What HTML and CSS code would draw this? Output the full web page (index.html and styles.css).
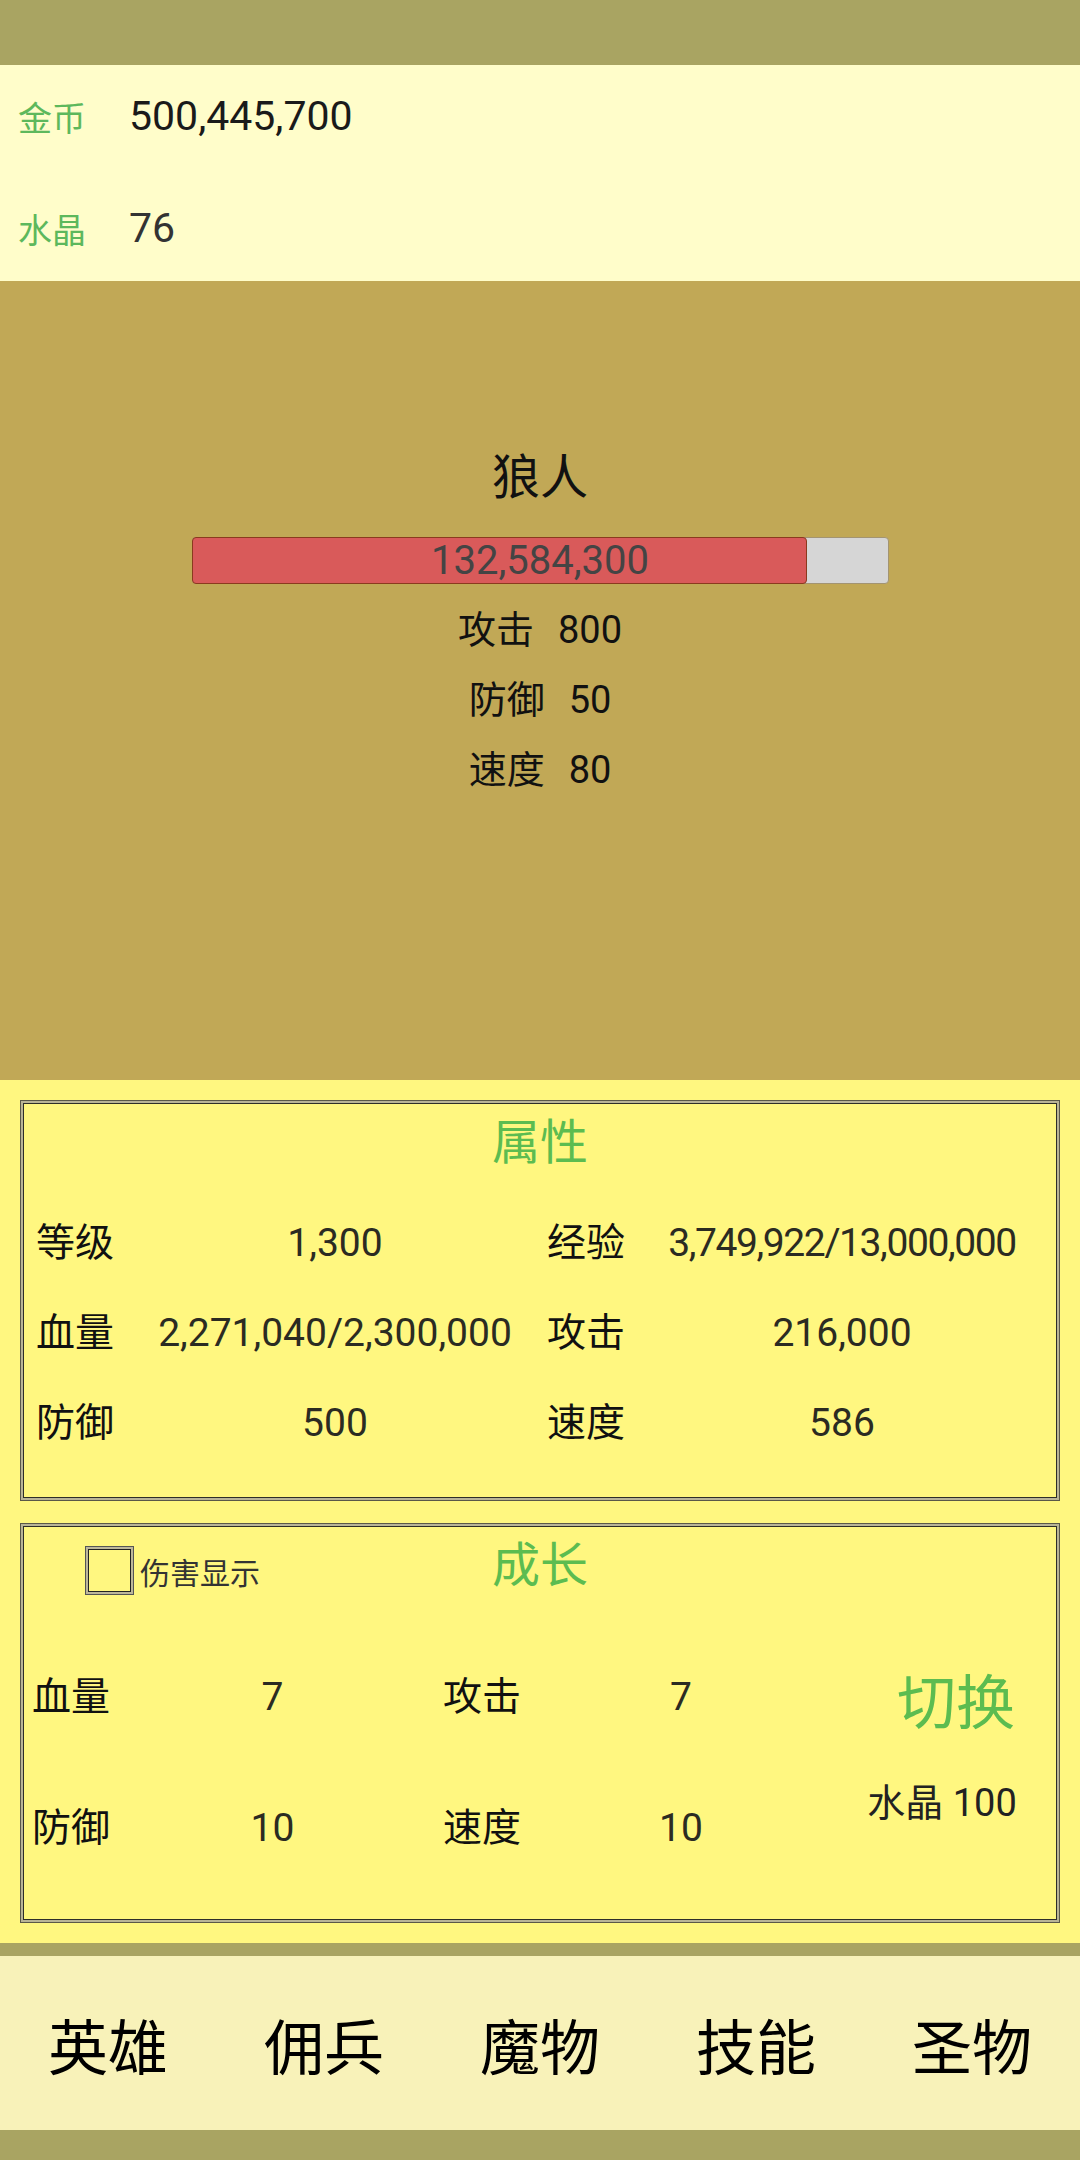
FILE: index.html
```html
<!DOCTYPE html>
<html>
<head>
  <title>狼人</title>
  <link rel="stylesheet" href="styles.css">
</head>
<body>

<div class="topbar"></div>

<div class="wallet">
  <div class="wallet-row"><span class="wallet-label">金币</span><span class="wallet-value">500,445,700</span></div>
  <div class="wallet-row"><span class="wallet-label">水晶</span><span class="wallet-value dim">76</span></div>
</div>

<div class="enemy">
  <div class="enemy-name">狼人</div>
  <div class="hpbar">
    <div class="hpfill" style="width: 88.6%"></div>
    <div class="hptext">132,584,300</div>
  </div>
  <div class="enemy-stats">
    <div class="enemy-stat"><span>攻击</span><span>800</span></div>
    <div class="enemy-stat"><span>防御</span><span>50</span></div>
    <div class="enemy-stat"><span>速度</span><span>80</span></div>
  </div>
</div>

<div class="panel">
  <div class="box attr">
    <div class="box-title">属性</div>
    <div class="attr-grid">
      <span class="lbl">等级</span><span class="val first">1,300</span>
      <span class="lbl">经验</span><span class="val tight">3,749,922/13,000,000</span>
      <span class="lbl">血量</span><span class="val first">2,271,040/2,300,000</span>
      <span class="lbl">攻击</span><span class="val">216,000</span>
      <span class="lbl">防御</span><span class="val first">500</span>
      <span class="lbl">速度</span><span class="val">586</span>
    </div>
  </div>

  <div class="box grow">
    <div class="grow-head">
      <label class="dmg-toggle"><span class="checkbox"></span><span>伤害显示</span></label>
      <div class="box-title">成长</div>
      <div></div>
    </div>
    <div class="grow-body">
      <div class="grow-grid">
        <span class="lbl">血量</span><span class="val first">7</span>
        <span class="lbl">攻击</span><span class="val">7</span>
        <span class="lbl">防御</span><span class="val first">10</span>
        <span class="lbl">速度</span><span class="val">10</span>
      </div>
      <div class="switch">
        <div class="switch-btn">切换</div>
        <div class="switch-cost"><span>水晶</span> <span>100</span></div>
      </div>
    </div>
  </div>
</div>

<div class="nav-gap"></div>

<div class="nav">
  <div class="nav-item">英雄</div>
  <div class="nav-item">佣兵</div>
  <div class="nav-item">魔物</div>
  <div class="nav-item">技能</div>
  <div class="nav-item">圣物</div>
</div>

</body>
</html>
```

FILE: styles.css
```css
body {
  margin: 0;
  width: 1080px;
  height: 2160px;
  background-color: #a9a462;
  font-family: Roboto, "Noto Sans CJK SC", sans-serif;
  color: #111;
}

.topbar {
  height: 65px;
}

/* Currency panel */
.wallet {
  height: 216px;
  box-sizing: border-box;
  padding-top: 1px;
  background-color: #fffdca;
  display: flex;
  flex-direction: column;
  gap: 12px;
}

.wallet-row {
  height: 100px;
  display: flex;
  align-items: center;
  padding-left: 18px;
}

.wallet-label {
  width: 111px;
  font-size: 34px;
  color: #5db85c;
}

.wallet-value {
  font-size: 41px;
  color: #1a1a1a;
}

.wallet-value.dim {
  color: #333;
}

/* Enemy area */
.enemy {
  height: 799px;
  box-sizing: border-box;
  padding-top: 167px;
  background-color: #c1a856;
  display: flex;
  flex-direction: column;
  align-items: center;
}

.enemy-name {
  font-size: 48px;
  line-height: 60px;
}

.hpbar {
  position: relative;
  margin-top: 29px;
  width: 697px;
  height: 47px;
  box-sizing: border-box;
  border: 1px solid #a39472;
  border-radius: 4px;
  background-color: #d6d6d6;
}

.hpfill {
  box-sizing: border-box;
  margin: -1px 0 0 -1px;
  height: 47px;
  border: 1px solid #8b3a1e;
  border-radius: 4px;
  background-color: #d95a5a;
}

.hptext {
  position: absolute;
  top: 0;
  left: 0;
  right: 0;
  bottom: 0;
  display: flex;
  align-items: center;
  justify-content: center;
  font-size: 40px;
  color: #444;
}

.enemy-stats {
  margin-top: 11px;
}

.enemy-stat {
  height: 70px;
  line-height: 70px;
  display: flex;
  justify-content: center;
  align-items: baseline;
  gap: 24px;
  font-size: 38px;
}

/* Stat boxes */
.panel {
  background-color: #fff780;
  padding: 20px 20px;
  display: flex;
  flex-direction: column;
  gap: 22px;
}

.box {
  border: 1px solid #5a5848;
  box-shadow: inset 0 0 0 2px #b9b496, inset 0 0 0 3px #2e2e28;
  box-sizing: border-box;
  padding-top: 12px;
}

.box-title {
  font-size: 48px;
  line-height: 60px;
  color: #5cbc50;
  text-align: center;
}

.attr {
  height: 401px;
}

.attr-grid {
  margin-top: 25px;
  padding-left: 15px;
  display: grid;
  grid-template-columns: 78px 433px 78px 1fr;
  grid-auto-rows: 90px;
  align-items: baseline;
}

.lbl {
  font-size: 39px;
  line-height: 90px;
  color: #111;
}

.val {
  font-size: 39px;
  line-height: 90px;
  color: #2b2b22;
  text-align: center;
  white-space: nowrap;
}

.attr-grid .val.first {
  padding-left: 9px;
}

.val.tight {
  letter-spacing: -1.4px;
}

.grow {
  height: 400px;
}

.grow-head {
  display: grid;
  grid-template-columns: 1fr auto 1fr;
  align-items: start;
}

.dmg-toggle {
  display: flex;
  align-items: center;
  gap: 6px;
  margin: 10px 0 0 64px;
  font-size: 30px;
  color: #333;
}

.checkbox {
  width: 49px;
  height: 49px;
  box-sizing: border-box;
  border: 1px solid #555;
  box-shadow: inset 0 0 0 2px #bdb79a, inset 0 0 0 3px #222;
}

.grow-body {
  margin-top: 36px;
  padding-left: 11px;
  display: flex;
}

.grow-grid {
  display: grid;
  grid-template-columns: 78px 333px 78px 320px;
  grid-auto-rows: 131px;
  align-items: baseline;
}

.grow-grid .lbl,
.grow-grid .val {
  line-height: 131px;
}

.grow-grid .val.first {
  padding-right: 8px;
}

.switch {
  flex: 1;
  display: flex;
  flex-direction: column;
  align-items: center;
  padding-top: 37px;
  gap: 41px;
}

.switch-btn {
  font-size: 59px;
  line-height: 70px;
  color: #5cbc50;
  padding-left: 12px;
}

.switch-cost {
  font-size: 38px;
  line-height: 46px;
  color: #222;
  padding-right: 16px;
}

/* Bottom navigation */
.nav-gap {
  height: 13px;
}

.nav {
  height: 174px;
  background-color: #f8f2b9;
  display: grid;
  grid-template-columns: repeat(5, 1fr);
  align-items: center;
}

.nav-item {
  text-align: center;
  font-size: 60px;
  color: #000;
}
```
